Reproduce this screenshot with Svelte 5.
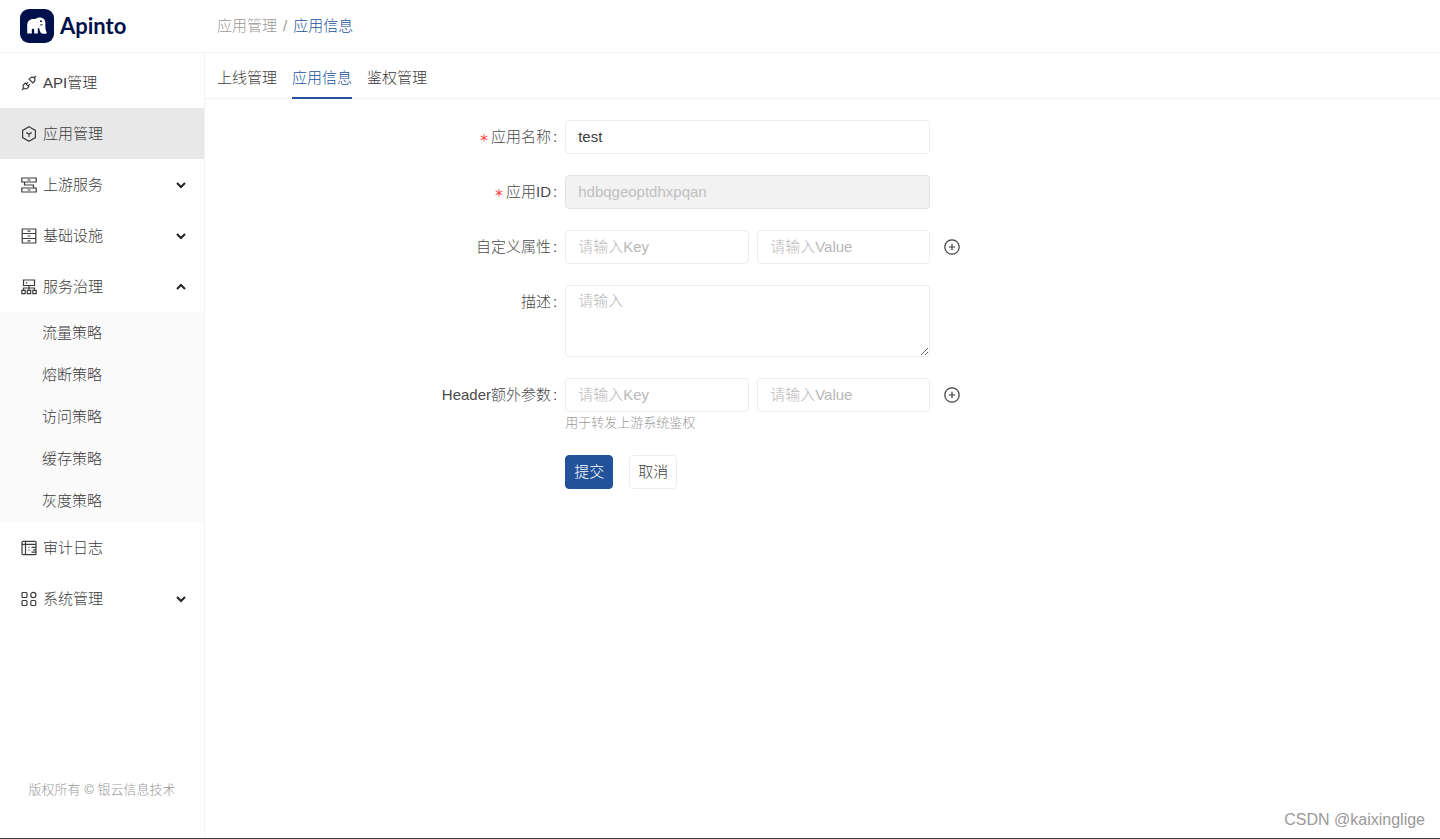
<script lang="ts">
    type Item = { key: string; name: string; icon: string; open?: boolean; children?: string[] };

    let menu: Item[] = $state([
        { key: 'api', name: 'API管理', icon: 'plug' },
        { key: 'app', name: '应用管理', icon: 'cube' },
        { key: 'upstream', name: '上游服务', icon: 'flow', open: false, children: [] },
        { key: 'infra', name: '基础设施', icon: 'rack', open: false, children: [] },
        {
            key: 'govern', name: '服务治理', icon: 'tree', open: true,
            children: ['流量策略', '熔断策略', '访问策略', '缓存策略', '灰度策略']
        },
        { key: 'audit', name: '审计日志', icon: 'log' },
        { key: 'system', name: '系统管理', icon: 'grid', open: false, children: [] }
    ]);
    let activeMenu = $state('app');

    const tabs = ['上线管理', '应用信息', '鉴权管理'];
    let activeTab = $state('应用信息');

    let appName = $state('test');
    let appId = $state('hdbqgeoptdhxpqan');
    let desc = $state('');
    let attrs = $state([{ key: '', value: '' }]);
    let headers = $state([{ key: '', value: '' }]);

    function clickMenu(item: Item) {
        if (item.children) {
            item.open = !item.open;
        } else {
            activeMenu = item.key;
        }
    }
</script>

{#snippet menuIcon(icon: string)}
    <svg class="icon" viewBox="0 0 16 16" aria-hidden="true">
        {#if icon === 'plug'}
            <path d="M1 15l2-2M13 3l2-2M2.8 13.2a2.6 2.6 0 0 1 0-3.7l1.4-1.4 3.7 3.7-1.4 1.4a2.6 2.6 0 0 1-3.7 0zM13.2 2.8a2.6 2.6 0 0 0-3.7 0L8.1 4.2l3.7 3.7 1.4-1.4a2.6 2.6 0 0 0 0-3.7zM5.2 8.9l1.8-1.8M7.2 10.900l1.800-1.800" />
        {:else if icon === 'cube'}
            <path d="M8 .8l6.400 3.600v7.200L8 15.200l-6.400-3.600V4.400zM5.200 6.600L8 8.100l2.800-1.500M8 8.100v3" />
        {:else if icon === 'flow'}
            <path d="M.8 1h14.400v4H.8zM.8 11h14.400v4H.8zM3.500 5v3h9v3M6.500 3h3M6.500 13h3" />
        {:else if icon === 'rack'}
            <path d="M1.200 1h13.600v14H1.200zM1.200 5.500h13.600M1.200 10.500h13.600M6.500 3.200h3M6.500 8h3M6.500 12.800h3" />
        {:else if icon === 'tree'}
            <path d="M2.500 1h11v5.500h-11zM8 6.500v4.800M2.500 11.300V9h11v2.300M.8 11.300h3.400v3.400H.8zM6.300 11.300h3.400v3.400H6.300zM11.800 11.300h3.400v3.400h-3.400zM4.800 3.800h1.500" />
        {:else if icon === 'log'}
            <path d="M2 1.300h12a1 1 0 0 1 1 1v11.400a1 1 0 0 1-1 1H2a1 1 0 0 1-1-1V2.300a1 1 0 0 1 1-1zM4.500 1.300v13.400M1 4.300h14M10.500 7.300H15M12 9.800h3M10.500 12.200H15M7.500 7.300h1M7.500 9.800h1" />
        {:else if icon === 'grid'}
            <rect x="1" y="1.5" width="5" height="5" rx="1" />
            <circle cx="12.3" cy="4" r="2.6" />
            <rect x="1" y="9.5" width="5" height="5" rx="1" />
            <rect x="9.8" y="9.5" width="5" height="5" rx="1" />
        {/if}
    </svg>
{/snippet}

{#snippet pairs(list: { key: string; value: string }[], id: string)}
    {#each list as row, i}
        <div class="pair">
            <input id={i === 0 ? id : undefined} class="input pair-key" placeholder="请输入Key" aria-label="Key" bind:value={row.key} />
            <input class="input pair-value" placeholder="请输入Value" aria-label="Value" bind:value={row.value} />
            <button type="button" class="add-btn" aria-label="添加" onclick={() => list.push({ key: '', value: '' })}>
                <svg class="icon" viewBox="0 0 16 16" aria-hidden="true">
                    <circle cx="8" cy="8" r="7.2" />
                    <path d="M8 4.8v6.4M4.8 8h6.4" />
                </svg>
            </button>
        </div>
    {/each}
{/snippet}

<div class="page">
    <header class="header">
        <a class="logo" href="#home">
            <svg class="logo-mark" viewBox="0 0 34 34" aria-hidden="true">
                <rect width="34" height="34" rx="9" fill="#00104a" />
                <path
                    fill="#fff"
                    d="M7.2 24.500V16.500c0-4.200 2.600-6.500 6-6.500h1.800c1.400-1.100 3-1.600 4.600-1.600 3.600 0 5.800 2.200 5.800 5.700 0 2.600-.3 4.500.3 6.700.3 1.200.7 2.200 1.200 3.400-2.400 1.100-5.300.9-6.600-1.300-.6-1-.8-2.100-1-3.400-.6-.2-1-.4-1.500-.7v5.700h-3.600v-3.400c0-.8-.5-1.300-1.200-1.300s-1.200.5-1.200 1.300v3.400z"
                />
                <path fill="none" stroke="#00104a" stroke-width="1" d="M20.200 16c1.200.2 2-.2 2.500-1" />
                <circle cx="21" cy="12.3" r="1" fill="#00104a" />
            </svg>
            <span class="logo-text">Apinto</span>
        </a>
        <nav class="breadcrumb">
            <a href="#app">应用管理</a>
            <span>/</span>
            <a class="current" href="#info">应用信息</a>
        </nav>
    </header>

    <div class="body">
        <aside class="sidebar">
            <nav class="menu">
                {#each menu as item}
                    <button class="menu-item" class:active={activeMenu === item.key} onclick={() => clickMenu(item)}>
                        {@render menuIcon(item.icon)}
                        <span class="menu-name">{item.name}</span>
                        {#if item.children}
                            <svg class="arrow" class:open={item.open} viewBox="0 0 10 10" aria-hidden="true">
                                <path d="M1 3l4 4 4-4" />
                            </svg>
                        {/if}
                    </button>
                    {#if item.open && item.children?.length}
                        <div class="submenu">
                            {#each item.children as child}
                                <a class="submenu-item" href="#{item.key}">{child}</a>
                            {/each}
                        </div>
                    {/if}
                {/each}
            </nav>
            <footer class="copyright">版权所有 © 银云信息技术</footer>
        </aside>

        <main class="main">
            <div class="tabs" role="tablist">
                {#each tabs as tab}
                    <button class="tab" class:active={activeTab === tab} role="tab" aria-selected={activeTab === tab} onclick={() => (activeTab = tab)}>{tab}</button>
                {/each}
            </div>

            <form class="form" onsubmit={(e) => e.preventDefault()}>
                <label class="label" for="name"><span class="required">＊</span>应用名称<span class="colon">:</span></label>
                <div class="control">
                    <input id="name" class="input" bind:value={appName} />
                </div>

                <label class="label" for="id"><span class="required">＊</span>应用ID<span class="colon">:</span></label>
                <div class="control">
                    <input id="id" class="input" disabled bind:value={appId} />
                </div>

                <label class="label" for="attr">自定义属性<span class="colon">:</span></label>
                <div class="control">{@render pairs(attrs, 'attr')}</div>

                <label class="label" for="desc">描述<span class="colon">:</span></label>
                <div class="control">
                    <textarea id="desc" class="input textarea" placeholder="请输入" bind:value={desc}></textarea>
                </div>

                <label class="label" for="header">Header额外参数<span class="colon">:</span></label>
                <div class="control">
                    {@render pairs(headers, 'header')}
                    <p class="help">用于转发上游系统鉴权</p>
                </div>

                <div class="actions">
                    <button type="submit" class="btn primary">提交</button>
                    <button type="button" class="btn">取消</button>
                </div>
            </form>
        </main>
    </div>

    <span class="watermark">CSDN @kaixinglige</span>
</div>

<style>
    :global(body) { background-color: #fff; }

    .page {
        position: relative;
        display: flex; flex-direction: column;
        box-sizing: border-box; min-height: 100vh;
        border-bottom: 1px solid #3f3c42;
        font-family: "Liberation Sans", "Noto Sans CJK SC", sans-serif;
        font-size: 15px; font-weight: 300; line-height: 22px; color: #3c3c3c;
    }
    a { color: inherit; text-decoration: none; }
    button, input, textarea { font: inherit; color: inherit; }
    button { cursor: pointer; }
    .icon { flex: none; width: 16px; height: 16px; fill: none; stroke: #3c3c3c; stroke-width: 1.2; }

    .header { display: flex; align-items: center; height: 52px; border-bottom: 1px solid #f4f4f4; }
    .logo { display: flex; align-items: center; gap: 6px; box-sizing: border-box; width: 205px; padding-left: 20px; }
    .logo-mark { width: 34px; height: 34px; }
    .logo-text { font-family: Lato, sans-serif; font-size: 22px; font-weight: 700; color: #00104a; }
    .breadcrumb { display: flex; gap: 6px; padding-left: 12px; color: #999; }
    .breadcrumb .current { color: #22529a; }

    .body { display: flex; flex: 1; }
    .sidebar {
        display: flex; flex-direction: column; flex: none;
        box-sizing: border-box; width: 205px; border-right: 1px solid #f4f4f4;
    }
    .menu { flex: 1; padding-top: 4px; }
    .menu-item {
        display: flex; align-items: center; gap: 6px;
        width: 100%; height: 51px; padding: 0 18px 0 21px;
        border: none; background: none; text-align: left;
    }
    .menu-item.active { background-color: #e8e8e8; }
    .menu-name { flex: 1; }
    .arrow { width: 10px; height: 10px; fill: none; stroke: #222; stroke-width: 2; }
    .arrow.open { transform: rotate(180deg); }
    .submenu { background-color: #fafafa; }
    .submenu-item { display: block; padding-left: 42px; line-height: 42px; }
    .copyright { padding-bottom: 37px; font-size: 13px; text-align: center; color: #999; }

    .main { flex: 1; min-width: 0; }
    .tabs { display: flex; gap: 15px; height: 45px; padding-left: 12px; border-bottom: 1px solid #f2f2f2; }
    .tab { height: 46px; padding: 5px 0 0; border: none; border-bottom: 2px solid transparent; background: none; }
    .tab.active { border-bottom-color: #22529a; color: #22529a; }

    .form { display: grid; grid-template-columns: 7fr 17fr; align-items: start; row-gap: 21px; padding-top: 21px; }
    .label { height: 34px; line-height: 34px; text-align: right; white-space: nowrap; color: #4a4a4a; }
    .required { margin-right: 2px; font-size: 10px; font-weight: 700; color: #ff4d4f; }
    .colon { margin: 0 8px 0 2px; }
    .input {
        display: block; box-sizing: border-box; width: 365px; height: 34px; padding: 0 12px 2px;
        border: 1px solid #ededed; border-radius: 4px; outline: none; background-color: #fff;
    }
    .input::placeholder { color: #b8b8b8; }
    .input:focus { border-color: #22529a; }
    .input:disabled { border-color: #e2e2e2; background-color: #f2f2f2; color: #bfbfbf; }
    .textarea { height: 72px; padding: 4px 12px; resize: vertical; }
    .pair { display: flex; align-items: center; gap: 8px; }
    .pair + .pair { margin-top: 8px; }
    .pair-key { width: 184px; }
    .pair-value { width: 173px; }
    .add-btn { display: flex; padding: 0 6px; border: none; background: none; }
    .help { margin: 0; font-size: 13px; color: #999; }

    .actions { grid-column: 2; display: flex; gap: 16px; }
    .btn { height: 34px; padding: 0 8px; border: 1px solid #ededed; border-radius: 4px; background-color: #fff; }
    .btn.primary { border-color: #22529a; background-color: #22529a; color: #fff; }

    .watermark { position: absolute; right: 15px; bottom: 7px; font-size: 16px; color: #999; }
</style>
